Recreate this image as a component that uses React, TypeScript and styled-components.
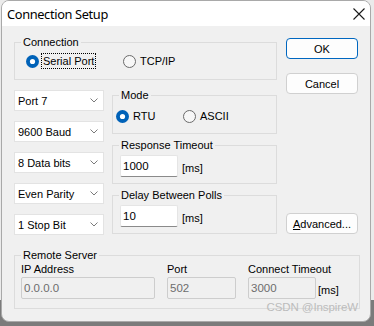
import styled, { createGlobalStyle } from 'styled-components';

const GlobalStyle = createGlobalStyle`
  html, body {
    margin: 0;
    padding: 0;
  }
  body {
    width: 374px;
    height: 326px;
    overflow: hidden;
    background: linear-gradient(#ebebeb 0, #ebebeb 300px, #7b7b7b 300px);
    font-family: 'Liberation Sans', Arial, sans-serif;
    font-size: 11px;
    color: #000;
  }
`;

const Window = styled.div`
  box-sizing: border-box;
  position: relative;
  width: 370px;
  height: 322px;
  margin-left: 1px;
  border: 1px solid #a9a9a9;
  border-radius: 8px;
  background: #f0f0f0;
  overflow: hidden;
  display: flex;
  flex-direction: column;
`;

const TitleBar = styled.div`
  height: 25px;
  flex: none;
  background: #fff;
  display: flex;
  align-items: center;
  justify-content: space-between;
  padding: 0 5px 0 5px;
`;

const Title = styled.span`
  font-family: 'Noto Sans', 'Open Sans', sans-serif;
  font-size: 12.8px;
  letter-spacing: -0.35px;
  color: #000;
`;

const Body = styled.div`
  display: grid;
  grid-template-columns: 263px 72px;
  column-gap: 9px;
  padding: 10px 11px 0 12px;
`;

const MainColumn = styled.div`
  display: flex;
  flex-direction: column;
`;

const ButtonColumn = styled.div`
  display: flex;
  flex-direction: column;
`;

const Group = styled.fieldset<{ $h?: number }>`
  box-sizing: border-box;
  margin: 0;
  padding: 0;
  min-width: 0;
  border: 1px solid #dcdcdc;
  ${(p) => (p.$h ? `height: ${p.$h}px;` : '')}
`;

const Legend = styled.legend`
  margin-left: 6px;
  padding: 0 2px;
  line-height: 13px;
  font-size: 11px;
`;

const RadioRow = styled.div<{ $pt: number; $pl: number; $pb?: number }>`
  display: flex;
  align-items: center;
  height: 16px;
  padding: ${(p) => p.$pt}px 0 ${(p) => p.$pb ?? 0}px ${(p) => p.$pl}px;
`;

const RadioOption = styled.label<{ $w: number }>`
  display: inline-flex;
  align-items: center;
  gap: 2px;
  width: ${(p) => p.$w}px;
  flex: none;
`;

const RadioText = styled.span<{ $focus?: boolean }>`
  padding: 0 1px;
  line-height: 14px;
  border: 1px dotted ${(p) => (p.$focus ? '#000' : 'transparent')};
`;

const Middle = styled.div`
  display: flex;
  gap: 8px;
  margin-top: 9px;
`;

const ComboColumn = styled.div`
  display: flex;
  flex-direction: column;
  gap: 10px;
  padding-top: 1px;
`;

const Combo = styled.div`
  box-sizing: border-box;
  width: 90px;
  height: 21px;
  background: #fff;
  border: 1px solid #e3e3e3;
  display: flex;
  align-items: center;
  justify-content: space-between;
  padding: 0 5px 0 3px;
`;

const SideGroups = styled.div`
  width: 165px;
  display: flex;
  flex-direction: column;
  gap: 5px;
`;

const FieldRow = styled.div`
  display: flex;
  align-items: flex-end;
  gap: 4px;
  padding: 3px 0 0 7px;
`;

const TextInput = styled.div<{ $w: number; $disabled?: boolean }>`
  box-sizing: border-box;
  width: ${(p) => p.$w}px;
  height: 22px;
  display: flex;
  align-items: center;
  padding-left: 2px;
  font-size: 11.5px;
  background: ${(p) => (p.$disabled ? '#f0f0f0' : '#fff')};
  color: ${(p) => (p.$disabled ? '#6d6d6d' : '#000')};
  border: 1px solid ${(p) => (p.$disabled ? '#cdcdcd' : '#e5e5e5')};
  border-bottom-color: ${(p) => (p.$disabled ? '#cdcdcd' : '#8a8a8a')};
  border-radius: 2px;
`;

const Unit = styled.span`
  line-height: 16px;
  padding-bottom: 1px;
`;

const Button = styled.div<{ $primary?: boolean; $mt?: number }>`
  box-sizing: border-box;
  height: 21px;
  margin-top: ${(p) => (p.$mt !== undefined ? `${p.$mt}px` : 'auto')};
  display: flex;
  align-items: center;
  justify-content: center;
  background: #fdfdfd;
  border: 1px solid ${(p) => (p.$primary ? '#0067c0' : '#d0d0d0')};
  border-radius: 4px;
  font-size: 11px;
`;

const AdvancedButton = styled(Button)`
  margin-bottom: 1px;
`;

const Mnemonic = styled.span`
  text-decoration: underline;
`;

const RemoteGroup = styled(Group)`
  grid-column: 1 / -1;
  width: 346px;
  margin-top: 14px;
`;

const RemoteGrid = styled.div`
  display: grid;
  grid-template-columns: 134px 69px auto;
  column-gap: 12px;
  row-gap: 1px;
  padding: 0 0 9px 6px;
`;

const FieldLabel = styled.span`
  line-height: 14px;
`;

const Inline = styled.div`
  display: flex;
  align-items: flex-end;
  gap: 2px;
`;

const Watermark = styled.span`
  position: absolute;
  right: 12px;
  bottom: 8px;
  font-size: 11.5px;
  color: #bcbcbc;
  letter-spacing: -0.1px;
`;

const Radio = ({ checked }: { checked?: boolean }) => (
  <svg width="13" height="13" viewBox="0 0 13 13">
    {checked ? (
      <>
        <circle cx="6.5" cy="6.5" r="6.5" fill="#0062b8" />
        <circle cx="6.5" cy="6.5" r="2.6" fill="#fff" />
      </>
    ) : (
      <circle cx="6.5" cy="6.5" r="6" fill="#f7f7f7" stroke="#6a6a6a" strokeWidth="1" />
    )}
  </svg>
);

const Chevron = () => (
  <svg width="8" height="5" viewBox="0 0 8 5">
    <path d="M0.5 0.5 L4 4 L7.5 0.5" fill="none" stroke="#7a7a7a" strokeWidth="1" />
  </svg>
);

const CloseIcon = () => (
  <svg width="12" height="12" viewBox="0 0 12 12">
    <path d="M0.5 0.5 L11.5 11.5 M11.5 0.5 L0.5 11.5" stroke="#1a1a1a" strokeWidth="1.1" />
  </svg>
);

const combos = ['Port 7', '9600 Baud', '8 Data bits', 'Even Parity', '1 Stop Bit'];

export default function App() {
  return (
    <>
      <GlobalStyle />
      <Window>
        <TitleBar>
          <Title>Connection Setup</Title>
          <CloseIcon />
        </TitleBar>
        <Body>
          <MainColumn>
            <Group>
              <Legend>Connection</Legend>
              <RadioRow $pt={4} $pl={11} $pb={10}>
                <RadioOption $w={97}>
                  <Radio checked />
                  <RadioText $focus>Serial Port</RadioText>
                </RadioOption>
                <RadioOption $w={80}>
                  <Radio />
                  <RadioText>TCP/IP</RadioText>
                </RadioOption>
              </RadioRow>
            </Group>

            <Middle>
              <ComboColumn>
                {combos.map((c) => (
                  <Combo key={c}>
                    <span>{c}</span>
                    <Chevron />
                  </Combo>
                ))}
              </ComboColumn>
              <SideGroups>
                <Group $h={45}>
                  <Legend>Mode</Legend>
                  <RadioRow $pt={6} $pl={3}>
                    <RadioOption $w={67}>
                      <Radio checked />
                      <RadioText>RTU</RadioText>
                    </RadioOption>
                    <RadioOption $w={70}>
                      <Radio />
                      <RadioText>ASCII</RadioText>
                    </RadioOption>
                  </RadioRow>
                </Group>
                <Group $h={45}>
                  <Legend>Response Timeout</Legend>
                  <FieldRow>
                    <TextInput $w={58}>1000</TextInput>
                    <Unit>[ms]</Unit>
                  </FieldRow>
                </Group>
                <Group $h={45}>
                  <Legend>Delay Between Polls</Legend>
                  <FieldRow>
                    <TextInput $w={58}>10</TextInput>
                    <Unit>[ms]</Unit>
                  </FieldRow>
                </Group>
              </SideGroups>
            </Middle>
          </MainColumn>

          <ButtonColumn>
            <Button $primary $mt={2}>OK</Button>
            <Button $mt={14}>Cancel</Button>
            <AdvancedButton>
              <Mnemonic>A</Mnemonic>dvanced...
            </AdvancedButton>
          </ButtonColumn>

          <RemoteGroup>
            <Legend>Remote Server</Legend>
            <RemoteGrid>
              <FieldLabel>IP Address</FieldLabel>
              <FieldLabel>Port</FieldLabel>
              <FieldLabel>Connect Timeout</FieldLabel>
              <TextInput $w={134} $disabled>0.0.0.0</TextInput>
              <TextInput $w={69} $disabled>502</TextInput>
              <Inline>
                <TextInput $w={68} $disabled>3000</TextInput>
                <Unit>[ms]</Unit>
              </Inline>
            </RemoteGrid>
          </RemoteGroup>
        </Body>
        <Watermark>CSDN @InspireW</Watermark>
      </Window>
    </>
  );
}
